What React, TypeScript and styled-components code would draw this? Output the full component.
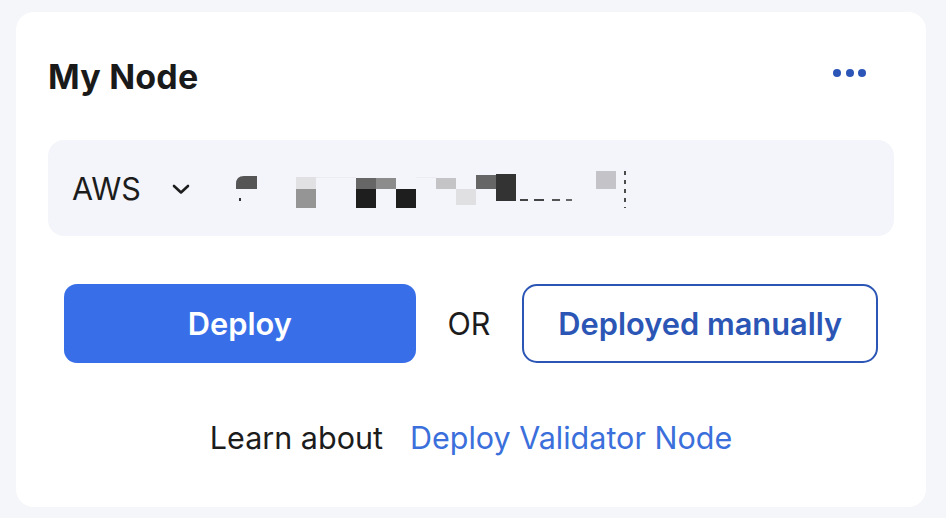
import React from "react";
import styled, { createGlobalStyle } from "styled-components";

const Global = createGlobalStyle`
  html, body { margin: 0; padding: 0; background: #f5f6fa; }
  body { font-family: Inter, "Noto Sans", sans-serif; -webkit-font-smoothing: antialiased; }
`;

const Page = styled.div`
  padding: 12px 20px 11px 16px;
  background: #f5f6fa;
`;

const Card = styled.section`
  background: #ffffff;
  border-radius: 18px;
  padding: 32px 32px 50px;
  display: flex;
  flex-direction: column;
`;

const Header = styled.header`
  height: 64px;
  display: flex;
  align-items: center;
  justify-content: space-between;
  margin-bottom: 32px;
`;

const Title = styled.h1`
  margin: 0;
  font-size: 34px;
  font-weight: 700;
  color: #1a1a1a;
  letter-spacing: 0.2px;
`;

const MoreButton = styled.button`
  border: 0;
  background: transparent;
  padding: 0 28px 0 0;
  margin-bottom: 7px;
  display: flex;
  align-items: center;
  gap: 4.5px;
  cursor: pointer;
`;

const Dot = styled.span`
  width: 8px;
  height: 8px;
  border-radius: 50%;
  background: #2c55b8;
`;

const Selector = styled.div`
  height: 96px;
  border-radius: 16px;
  background: #f4f5fa;
  display: flex;
  align-items: center;
  padding: 0 24px;
  margin-bottom: 48px;
`;

const Provider = styled.span`
  font-size: 30.5px;
  color: #1c1c1c;
  margin-right: 31px;
`;

const Chevron = styled.svg`
  width: 18px;
  height: 11px;
  margin-right: 40px;
  margin-top: 2px;
`;

const Mosaic = styled.svg`
  width: 400px;
  height: 45px;
  margin-top: 1px;
`;

const Actions = styled.div`
  display: flex;
  align-items: center;
  gap: 32px;
  padding: 0 16px;
  margin-bottom: 54px;
`;

const ActionButton = styled.button<{ $variant: "primary" | "outline" }>`
  flex: 1;
  height: 79px;
  border-radius: ${(p) => (p.$variant === "primary" ? "13px" : "15px")};
  font-family: Inter, "Noto Sans", sans-serif;
  font-size: 30.8px;
  font-weight: 600;
  cursor: pointer;
  background: ${(p) => (p.$variant === "primary" ? "#386fe9" : "#ffffff")};
  color: ${(p) => (p.$variant === "primary" ? "#ffffff" : "#2c56b5")};
  border: ${(p) => (p.$variant === "primary" ? "none" : "2px solid #2c56b5")};
`;

const Or = styled.span`
  font-size: 30.5px;
  color: #1c1c1c;
`;

const Learn = styled.p`
  margin: 0;
  height: 40px;
  display: flex;
  align-items: center;
  justify-content: center;
  gap: 27px;
  font-size: 30.5px;
  color: #1c1c1c;
`;

const Link = styled.a`
  color: #3b6fdb;
  text-decoration: none;
`;

const blocks: [number, number, number, number, string][] = [
  [66, 11, 20, 12, "#e1e1e4"],
  [66, 23, 20, 19, "#959595"],
  [126, 12, 20, 11, "#666666"],
  [126, 23, 20, 19, "#1e1e1e"],
  [146, 12, 20, 11, "#8c8c8c"],
  [166, 23, 20, 19, "#1e1e1e"],
  [206, 12, 20, 11, "#c4c4c6"],
  [226, 23, 20, 16, "#e0e0e2"],
  [246, 9, 20, 14, "#666666"],
  [266, 8, 20, 27, "#333333"],
  [366, 5, 20, 18, "#c4c4c8"],
];

export default function App() {
  return (
    <>
      <Global />
      <Page>
        <Card>
          <Header>
            <Title>My Node</Title>
            <MoreButton aria-label="More">
              <Dot />
              <Dot />
              <Dot />
            </MoreButton>
          </Header>
          <Selector>
            <Provider>AWS</Provider>
            <Chevron viewBox="0 0 18 11" fill="none">
              <path d="M2 2 L9 8.5 L16 2" stroke="#1c1c1c" strokeWidth="2.6" strokeLinecap="round" strokeLinejoin="round" />
            </Chevron>
            <Mosaic viewBox="0 0 400 45">
              <path d="M6 23 V18 Q6 10 14 10 H27 V23 Z" fill="#555555" />
              <rect x="9" y="32" width="2" height="3" fill="#333" />
              {blocks.map(([x, y, w, h, c], i) => (
                <rect key={i} x={x} y={y} width={w} height={h} fill={c} />
              ))}
              <rect x="86" y="11" width="40" height="1" fill="#ececf0" />
              <rect x="186" y="11" width="20" height="1" fill="#ececf0" />
              <rect x="290" y="33" width="8" height="2" fill="#444" />
              <rect x="304" y="33" width="10" height="2" fill="#444" />
              <rect x="322" y="33" width="8" height="2" fill="#555" />
              <rect x="336" y="33" width="6" height="2" fill="#666" />
              <line x1="395" y1="5" x2="395" y2="42" stroke="#222" strokeWidth="1.6" strokeDasharray="4 5" />
            </Mosaic>
          </Selector>
          <Actions>
            <ActionButton $variant="primary">Deploy</ActionButton>
            <Or>OR</Or>
            <ActionButton $variant="outline">Deployed manually</ActionButton>
          </Actions>
          <Learn>
            <span>Learn about</span>
            <Link href="#">Deploy Validator Node</Link>
          </Learn>
        </Card>
      </Page>
    </>
  );
}
